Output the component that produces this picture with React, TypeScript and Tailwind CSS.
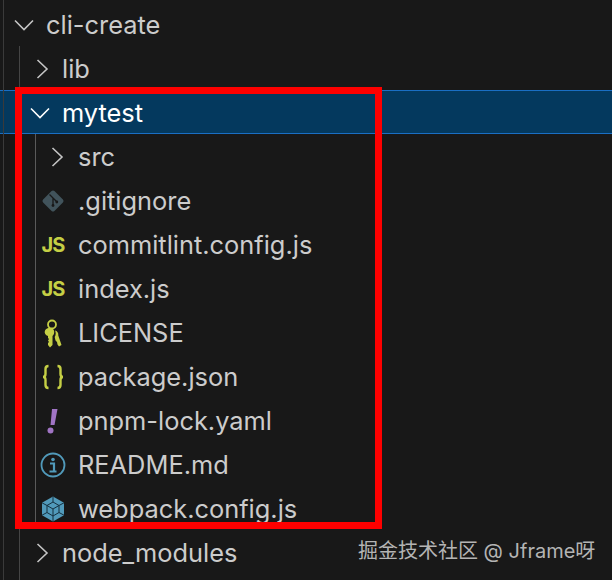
import type { ReactNode } from 'react'

const ChevronRight = () => (
  <svg width="13" height="20" viewBox="0 0 13 20" fill="none" stroke="#c5c5c5" strokeWidth="1.6">
    <path d="M1.500 1l9.500 9-9.500 9" />
  </svg>
)

const ChevronDown = ({ color = '#c5c5c5' }: { color?: string }) => (
  <svg width="20" height="12" viewBox="0 0 20 12" fill="none" stroke={color} strokeWidth="1.6">
    <path d="M1 1.500l9 9 9-9" />
  </svg>
)

const JsIcon = () => (
  <span className="text-[20px] font-bold tracking-[-1px] text-[#c5cf45] leading-none">JS</span>
)

const GitIcon = () => (
  <svg width="24" height="24" viewBox="0 0 24 24">
    <rect x="4" y="4" width="16" height="16" rx="2" fill="#41535b" transform="rotate(45 12 12)" />
    <path d="M8.500 5.500l7 7M12 9v7" stroke="#181818" strokeWidth="1.300" fill="none" />
    <circle cx="12" cy="16.500" r="1.400" fill="#181818" />
    <circle cx="15.800" cy="13" r="1.400" fill="#181818" />
  </svg>
)

const KeyIcon = () => (
  <svg width="18" height="29" viewBox="0 0 18 29" fill="#c5cf45">
    <circle cx="8" cy="5.500" r="4" fill="none" stroke="#c5cf45" strokeWidth="1.800" />
    <path d="M3 9.500c3-1 6-.5 7 2 .7 2-.2 4.500-1.500 5.500V26l-2.500 2.500-2-2.500v-2l1-1-1-1.500 1-1.500-1-1V17C1.500 16 .2 14 .8 12.200 1.200 11 2 10 3 9.500z" />
    <path d="M11 11.500c2.200.5 3.600 2.200 3.300 5l3.200 9.500-2.500 1.500-1.500-2-.5-2.500-1.500-1.500-.8-3.500c1.300-2 1.300-4.500.300-6.500z" />
  </svg>
)

const BracesIcon = () => (
  <svg width="22" height="26" viewBox="0 0 22 26" fill="none" stroke="#c5cf45" strokeWidth="2.400">
    <path d="M6.500 2C4 2 3.500 3 3.500 5v5c0 2-1 3-2.500 3 1.500 0 2.500 1 2.500 3v5c0 2 .5 3 3 3" />
    <path d="M15.500 2c2.500 0 3 1 3 3v5c0 2 1 3 2.500 3-1.500 0-2.500 1-2.500 3v5c0 2-.5 3-3 3" />
  </svg>
)

const BangIcon = () => (
  <svg width="14" height="26" viewBox="0 0 14 26" fill="#a074c4">
    <path d="M6 1h5.500L8.500 17H4.500z" />
    <circle cx="4.500" cy="22.500" r="3" />
  </svg>
)

const InfoIcon = () => (
  <svg width="26" height="26" viewBox="0 0 26 26" fill="none" stroke="#519aba">
    <circle cx="13" cy="13" r="11.500" strokeWidth="1.800" />
    <circle cx="13" cy="7.500" r="1.800" fill="#519aba" stroke="none" />
    <path d="M10 11.500h4v8M9.500 19.500h7" strokeWidth="2.200" />
  </svg>
)

const WebpackIcon = () => (
  <svg width="24" height="26" viewBox="0 0 24 26" fill="none">
    <path d="M12 .5l11 6.300v12.400L12 25.500 1 19.200V6.800z" fill="#519aba" />
    <path
      d="M12 6l6 3.500v7L12 20l-6-3.500v-7zM6 9.500l6 3.500 6-3.500M12 13v7M12 .5V6M1 6.800l5 2.700M23 6.800l-5 2.700M1 19.200l5-2.700M23 19.200l-5-2.700M12 20v5.500"
      stroke="#14303f"
      strokeWidth="1"
    />
  </svg>
)

function FolderRow({ level, open, selected, name }: { level: 0 | 1 | 2; open?: boolean; selected?: boolean; name: string }) {
  const pad = level === 0 ? 'pl-[14px]' : level === 1 ? 'pl-[30px]' : 'pl-[46px]'
  return (
    <div
      className={`flex items-center h-[44px] pt-[2px] ${pad} ${selected ? 'bg-[#04395e] border-y border-[#1a6fc4] text-white' : 'text-[#cccccc]'}`}
    >
      <div className={`w-[32px] flex items-center ${open ? 'justify-start' : level === 2 ? 'pl-[5px]' : 'pl-[6px]'}`}>
        {open ? <ChevronDown color={selected ? '#ffffff' : '#c5c5c5'} /> : <ChevronRight />}
      </div>
      <span>{name}</span>
    </div>
  )
}

function FileRow({ icon, name }: { icon: ReactNode; name: string }) {
  return (
    <div className="flex items-center h-[44px] pt-[2px] pl-[40px] text-[#cccccc]">
      <div className="w-[38px] flex items-center justify-center pr-[12px]">{icon}</div>
      <span>{name}</span>
    </div>
  )
}

export default function App() {
  return (
    <div
      className="relative w-[612px] h-[580px] overflow-hidden bg-[#181818] pt-[2px] text-[25.4px] leading-none"
      style={{ fontFamily: 'Inter, "Noto Sans CJK SC", sans-serif' }}
    >
      <FolderRow level={0} open name="cli-create" />
      <FolderRow level={1} name="lib" />
      <FolderRow level={1} open selected name="mytest" />
      <FolderRow level={2} name="src" />
      <FileRow icon={<GitIcon />} name=".gitignore" />
      <FileRow icon={<JsIcon />} name="commitlint.config.js" />
      <FileRow icon={<JsIcon />} name="index.js" />
      <FileRow icon={<KeyIcon />} name="LICENSE" />
      <FileRow icon={<BracesIcon />} name="package.json" />
      <FileRow icon={<BangIcon />} name="pnpm-lock.yaml" />
      <FileRow icon={<InfoIcon />} name="README.md" />
      <FileRow icon={<WebpackIcon />} name="webpack.config.js" />
      <FolderRow level={1} name="node_modules" />

      {/* Indent guides */}
      <div className="absolute left-[3px] top-0 bottom-0 w-px bg-[#3a3a3a]" />
      <div className="absolute left-[19px] top-[46px] h-[44px] w-px bg-[#454545]" />
      <div className="absolute left-[19px] top-[529px] bottom-0 w-px bg-[#454545]" />
      <div className="absolute left-[35px] top-[134px] h-[390px] w-px bg-[#5a5a5a]" />

      {/* Red annotation box */}
      <div className="absolute left-[15px] top-[87px] w-[367px] h-[442px] border-[7px] border-[#fe0000]" />

      {/* Watermark */}
      <div className="absolute left-[358px] top-[539px] text-[20px] leading-[24px] text-[#b4b4b4]">掘金技术社区 @ Jframe呀</div>
    </div>
  )
}
